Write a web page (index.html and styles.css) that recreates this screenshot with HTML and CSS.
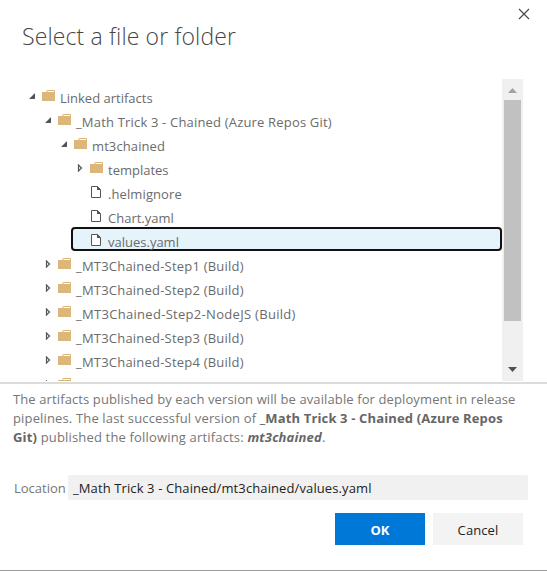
FILE: index.html
```
<!DOCTYPE html>
<html lang="en">
<head>
<meta charset="utf-8">
<title>Select a file or folder</title>
<link rel="stylesheet" href="styles.css">
</head>
<body>
<svg width="0" height="0" class="defs">
  <symbol id="folder" viewBox="0 0 14 12"><path d="M0 2h4l1-2h8v11H0z" fill="#dcb67a"/><path d="M5.500 1H12v1H5z" fill="#fff"/></symbol>
  <symbol id="file" viewBox="0 0 12 14"><path d="M1.500 1.500h6l3 3v8h-9z" fill="#fff" stroke="#555" /><path d="M7 1l4 4H7z" fill="#555"/></symbol>
  <symbol id="open" viewBox="0 0 7 7"><path d="M6 0v6H0z" fill="#555"/></symbol>
  <symbol id="closed" viewBox="0 0 7 8"><path d="M1.500 1v6l3-3z" fill="none" stroke="#555" stroke-width="1.200"/></symbol>
</svg>
<main class="dialog">
  <header class="head">
    <h1><span class="title">Select a file or folder</span></h1>
    <svg class="close" viewBox="0 0 12 12"><path d="M1 1l10 10M11 1L1 11" stroke="#444" stroke-width="1.100"/></svg>
  </header>
  <section class="browser">
    <div class="tree">
      <div class="row"><svg class="arrow"><use href="#open"/></svg><svg class="folder"><use href="#folder"/></svg><span class="t-root">Linked artifacts</span></div>
      <div class="row l1"><svg class="arrow"><use href="#open"/></svg><svg class="folder"><use href="#folder"/></svg><span class="t-math">_Math Trick 3 - Chained (Azure Repos Git)</span></div>
      <div class="row l2"><svg class="arrow"><use href="#open"/></svg><svg class="folder"><use href="#folder"/></svg><span class="t-mt">mt3chained</span></div>
      <div class="row l3"><svg class="arrow shut"><use href="#closed"/></svg><svg class="folder"><use href="#folder"/></svg><span class="t-tpl">templates</span></div>
      <div class="row l3"><i class="arrow"></i><svg class="file"><use href="#file"/></svg><span class="t-mt">.helmignore</span></div>
      <div class="row l3"><i class="arrow"></i><svg class="file"><use href="#file"/></svg><span class="t-chart">Chart.yaml</span></div>
      <div class="row l3 selected"><i class="arrow"></i><svg class="file"><use href="#file"/></svg><span class="t-values">values.yaml</span></div>
      <div class="row l1"><svg class="arrow shut"><use href="#closed"/></svg><svg class="folder"><use href="#folder"/></svg><span class="t-step">_MT3Chained-Step1 (Build)</span></div>
      <div class="row l1"><svg class="arrow shut"><use href="#closed"/></svg><svg class="folder"><use href="#folder"/></svg><span class="t-step">_MT3Chained-Step2 (Build)</span></div>
      <div class="row l1"><svg class="arrow shut"><use href="#closed"/></svg><svg class="folder"><use href="#folder"/></svg><span class="t-node">_MT3Chained-Step2-NodeJS (Build)</span></div>
      <div class="row l1"><svg class="arrow shut"><use href="#closed"/></svg><svg class="folder"><use href="#folder"/></svg><span class="t-step">_MT3Chained-Step3 (Build)</span></div>
      <div class="row l1"><svg class="arrow shut"><use href="#closed"/></svg><svg class="folder"><use href="#folder"/></svg><span class="t-step">_MT3Chained-Step4 (Build)</span></div>
      <div class="row l1"><svg class="arrow shut"><use href="#closed"/></svg><svg class="folder"><use href="#folder"/></svg></div>
    </div>
    <div class="scrollbar">
      <svg class="up" viewBox="0 0 9 5"><path d="M0 5l4.500-5L9 5z" fill="#a3a3a3"/></svg>
      <div class="thumb"></div>
      <svg class="down" viewBox="0 0 9 5"><path d="M0 0h9L4.500 5z" fill="#505050"/></svg>
    </div>
  </section>
  <p class="info"><span class="p1">The artifacts published by each version will be available for deployment in release</span><br><span class="p2">pipelines. The last successful version of <b>_Math Trick 3 - Chained (Azure Repos</b></span><br><span class="p3"><b>Git)</b> published the following artifacts: <b><em>mt3chained</em></b>.</span></p>
  <div class="location"><label>Location</label><div class="field"><span class="t-path">_Math Trick 3 - Chained/mt3chained/values.yaml</span></div></div>
  <footer class="actions"><button class="ok">OK</button><button>Cancel</button></footer>
</main>
</body>
</html>
```
FILE: styles.css
```
* { box-sizing: border-box; }
body { margin: 0; background: #fff; font-family: "Open Sans", "Noto Sans", sans-serif; font-size: 13px; color: #6b6b6b; }
.defs { position: absolute; }
svg { display: block; flex: none; }
.dialog { width: 547px; height: 571px; border-bottom: 1px solid #999; overflow: hidden; white-space: nowrap; }
.head { display: flex; justify-content: space-between; height: 79px; padding: 8px 17px 0 22px; }
h1 { margin: 11px 0 0; font-family: "Open Sans Light", "Open Sans", "Noto Sans", sans-serif; font-size: 23px; font-weight: 300; line-height: 34px; color: #444; }
.title { letter-spacing: .14px; }
.close { width: 12px; height: 12px; }
.browser { display: flex; height: 302px; margin: 0 24px 0 29px; }
.tree { flex: 1; min-width: 0; padding-top: 4px; overflow: hidden; }
.row { display: flex; height: 24px; line-height: 30px; }
.l1 { margin-left: 16px; }
.l2 { margin-left: 32px; }
.l3 { margin-left: 48px; }
.arrow { flex: none; width: 7px; height: 7px; margin: 10px 6px 0 0; }
.shut { height: 8px; margin-top: 9px; }
.folder { width: 14px; height: 12px; margin: 7px 4px 0 0; }
.file { width: 12px; height: 14px; margin: 6px 6px 0 0; }
.selected { margin-left: 42px; padding-left: 4px; border: 2px solid #111; border-radius: 4px; background: #e5f3fb; line-height: 26px; }
.selected .file { margin-top: 4px; }
.t-math { letter-spacing: .18px; }
.t-mt { letter-spacing: .1px; }
.t-step { letter-spacing: .21px; }
.t-node { letter-spacing: .3px; }
.t-path { letter-spacing: .11px; }
.p1 { letter-spacing: .11px; }
.p2 { letter-spacing: .15px; }
.p3 { letter-spacing: .17px; }
.scrollbar { display: flex; flex-direction: column; align-items: center; width: 21px; background: #f0f0f0; }
.scrollbar svg { width: 9px; height: 5px; }
.up { margin: 9px 0 7px; }
.thumb { width: 17px; height: 221px; background: #c1c1c1; }
.down { margin-top: 46px; }
.info { margin: 1px 0 0; padding: 6px 0 0 13px; height: 93px; border-top: 2px solid #dcdcdc; line-height: 19px; color: #767676; }
.info b { color: #666; font-weight: 700; }
.location { display: flex; height: 25px; padding-left: 14px; line-height: 26px; color: #767676; }
.location label { width: 54px; }
.field { width: 460px; padding-left: 5px; border-radius: 2px; background: #f1f1f1; color: #222; }
.actions { display: flex; justify-content: flex-end; gap: 8px; padding: 13px 24px 0 0; }
button { width: 90px; height: 32px; padding: 2px 0 0; border: 0; background: #f3f3f3; color: #222; font: 500 13px "Open Sans", "Noto Sans", sans-serif; letter-spacing: .1px; }
.ok { background: #0078d7; color: #fff; font-weight: 700; }
```
